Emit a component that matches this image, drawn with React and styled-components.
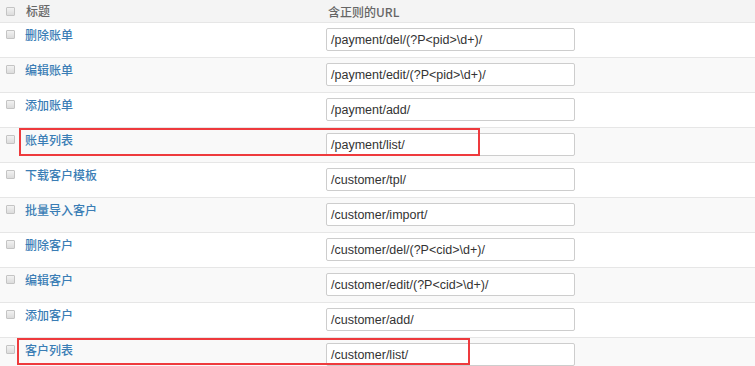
import React from "react";
import styled, { createGlobalStyle } from "styled-components";

const rows = [
  { title: "删除账单", url: "/payment/del/(?P<pid>\\d+)/" },
  { title: "编辑账单", url: "/payment/edit/(?P<pid>\\d+)/" },
  { title: "添加账单", url: "/payment/add/" },
  { title: "账单列表", url: "/payment/list/", mark: { left: 19, width: 461, height: 28 } },
  { title: "下载客户模板", url: "/customer/tpl/" },
  { title: "批量导入客户", url: "/customer/import/" },
  { title: "删除客户", url: "/customer/del/(?P<cid>\\d+)/" },
  { title: "编辑客户", url: "/customer/edit/(?P<cid>\\d+)/" },
  { title: "添加客户", url: "/customer/add/" },
  { title: "客户列表", url: "/customer/list/", mark: { left: 17, width: 453, height: 27 } },
];

const GlobalStyle = createGlobalStyle`
  body {
    margin: 0;
    background: #fff;
    font-family: "Liberation Sans", "Noto Sans CJK SC", sans-serif;
    font-size: 13px;
    overflow: hidden;
  }
`;

const Table = styled.div`
  width: 755px;
`;

const HeadRow = styled.div`
  display: flex;
  height: 22px;
  align-items: center;
  background: #f4f4f4;
  color: #666;
`;

const Row = styled.div`
  position: relative;
  display: flex;
  align-items: flex-start;
  height: 34px;
  border-top: 1px solid #e6e6e6;
  background: ${(p) => (p.$odd ? "#fff" : "#f9f9f9")};
`;

const CheckCell = styled.div`
  width: 25px;
  padding-left: 6px;
  box-sizing: border-box;
  padding-top: ${(p) => (p.$head ? "0" : "7px")};
`;

const Check = styled.span`
  display: block;
  width: 7px;
  height: 7px;
  border: 1px solid #c4c4c4;
  border-radius: 1px;
  background: linear-gradient(#f2f2f2, #dcdcdc);
`;

const TitleCell = styled.div`
  width: 301px;
  padding-top: ${(p) => (p.$head ? "0" : "3px")};
  padding-left: ${(p) => (p.$head ? "1px" : "0")};
  line-height: 18px;
  font-size: 12px;
  font-weight: 500;
  font-family: "Noto Sans CJK SC", "Liberation Sans", sans-serif;
  color: ${(p) => (p.$head ? "#666" : "#3a7db5")};
`;

const UrlCell = styled.div`
  flex: 1;
  padding-top: ${(p) => (p.$head ? "0" : "5px")};
  padding-left: ${(p) => (p.$head ? "1px" : "0")};
  color: #666;
`;

const HeadText = styled.span`
  font-family: "Noto Sans CJK SC", "Liberation Sans", sans-serif;
  font-size: 12px;
  font-weight: 500;
`;

const UrlInput = styled.div`
  width: 249px;
  height: 23px;
  box-sizing: border-box;
  border: 1px solid #cdcdcd;
  border-radius: 2px;
  background: #fff;
  padding: 0 4px;
  line-height: 22px;
  font-size: 12.5px;
  color: #333;
  white-space: nowrap;
  overflow: hidden;
`;

const Mark = styled.div`
  position: absolute;
  top: 0;
  border: 2px solid #ee3a3d;
  box-sizing: border-box;
  pointer-events: none;
`;

export default function App() {
  return (
    <>
      <GlobalStyle />
      <Table>
        <HeadRow>
          <CheckCell $head>
            <Check />
          </CheckCell>
          <TitleCell $head>标题</TitleCell>
          <UrlCell $head>
            <HeadText>含正则的URL</HeadText>
          </UrlCell>
        </HeadRow>
        {rows.map((r, i) => (
          <Row key={r.url} $odd={i % 2 === 0}>
            <CheckCell>
              <Check />
            </CheckCell>
            <TitleCell>{r.title}</TitleCell>
            <UrlCell>
              <UrlInput>{r.url}</UrlInput>
            </UrlCell>
            {r.mark && (
              <Mark
                style={{
                  left: r.mark.left,
                  width: r.mark.width,
                  height: r.mark.height,
                }}
              />
            )}
          </Row>
        ))}
      </Table>
    </>
  );
}
